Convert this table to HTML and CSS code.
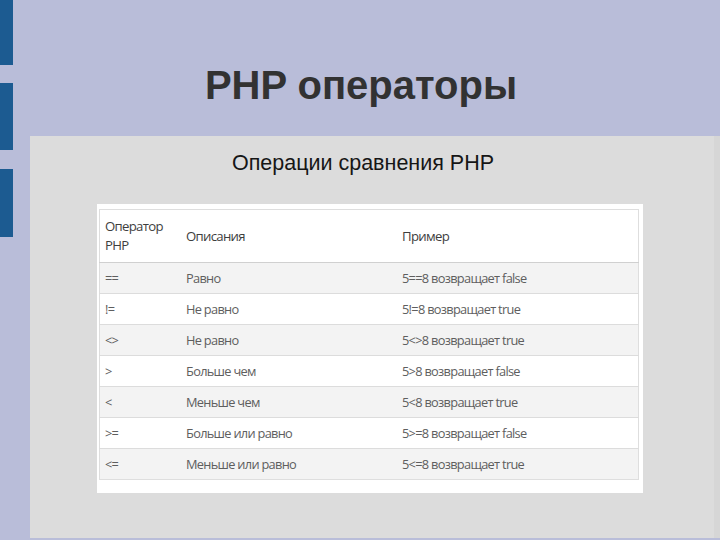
FILE: index.html
```html
<!DOCTYPE html>
<html lang="ru">
<head>
<meta charset="utf-8">
<title>PHP операторы</title>
<link rel="stylesheet" href="styles.css">
</head>
<body>
<div class="slide">
  <div class="rail">
    <div class="bar bar1"></div>
    <div class="bar bar2"></div>
    <div class="bar bar3"></div>
  </div>
  <div class="main">
    <header class="head">
      <h1 class="title">PHP операторы</h1>
    </header>
    <section class="panel">
      <h2 class="subtitle">Операции сравнения PHP</h2>
      <div class="card">
        <table class="ops">
          <thead>
            <tr><th class="c1">Оператор<br>PHP</th><th class="c2">Описания</th><th class="c3">Пример</th></tr>
          </thead>
          <tbody>
            <tr><td>==</td><td>Равно</td><td>5==8 возвращает false</td></tr>
            <tr><td>!=</td><td>Не равно</td><td>5!=8 возвращает true</td></tr>
            <tr><td>&lt;&gt;</td><td>Не равно</td><td>5&lt;&gt;8 возвращает true</td></tr>
            <tr><td>&gt;</td><td>Больше чем</td><td>5&gt;8 возвращает false</td></tr>
            <tr><td>&lt;</td><td>Меньше чем</td><td>5&lt;8 возвращает true</td></tr>
            <tr><td>&gt;=</td><td>Больше или равно</td><td>5&gt;=8 возвращает false</td></tr>
            <tr><td>&lt;=</td><td>Меньше или равно</td><td>5&lt;=8 возвращает true</td></tr>
          </tbody>
        </table>
      </div>
    </section>
  </div>
</div>
</body>
</html>
```
FILE: styles.css
```css
html, body {
  margin: 0;
  padding: 0;
}
body {
  background: #b9bdd9;
  width: 720px;
  height: 540px;
  overflow: hidden;
  font-family: "Liberation Sans", Arial, sans-serif;
}
.slide {
  display: flex;
  height: 540px;
}
.rail {
  width: 30px;
  flex: none;
  display: flex;
  flex-direction: column;
}
.bar {
  width: 13px;
  background: #1c5b91;
}
.bar1 { height: 65px; }
.bar2 { height: 67px; margin-top: 18px; }
.bar3 { height: 68px; margin-top: 19px; }
.main {
  flex: 1;
  display: flex;
  flex-direction: column;
}
.head {
  height: 136px;
  flex: none;
}
.title {
  margin: 62px 0 0;
  padding-right: 28px;
  text-align: center;
  font-size: 40px;
  font-weight: bold;
  line-height: 46px;
  color: #323232;
}
.panel {
  height: 402px;
  background: #dcdcdc;
  border-right: 6px solid #d6d6d6;
  display: flex;
  flex-direction: column;
}
.subtitle {
  margin: 13px 0 0;
  padding-right: 18px;
  text-align: center;
  font-size: 21.5px;
  font-weight: normal;
  line-height: 28px;
  color: #161616;
}
.card {
  margin: 27px 0 0 67px;
  width: 546px;
  height: 289px;
  box-sizing: border-box;
  background: #fff;
  padding: 5px 4px 0 2px;
}
.ops {
  width: 540px;
  border-collapse: collapse;
  font-family: "Open Sans", "Noto Sans", sans-serif;
  font-size: 12.8px;
  letter-spacing: -0.7px;
  color: #5e5e5e;
  border: 1px solid #dedede;
}
.ops th {
  text-align: left;
  font-weight: 500;
  font-size: 13.2px;
  color: #3e3e3e;
  height: 52px;
  padding: 0 5px;
  line-height: 19px;
  border-bottom: 1px solid #d0d0d0;
}
.ops .c1 { width: 71px; }
.ops .c2 { width: 206px; }
.ops td {
  height: 30px;
  padding: 0 5px;
  border-top: 1px solid #dcdcdc;
}
.ops tbody tr:nth-child(odd) td {
  background: #f3f3f3;
}
```
